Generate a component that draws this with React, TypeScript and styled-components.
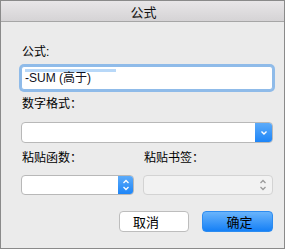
import React from "react";
import styled, { createGlobalStyle } from "styled-components";

const Global = createGlobalStyle`
  html, body { margin: 0; padding: 0; background: #ebebeb; }
  body { font-family: "Liberation Sans", "Noto Sans CJK SC", sans-serif; }
`;

const Window = styled.div`
  width: 285px;
  height: 249px;
  box-sizing: border-box;
  border: 1px solid #8a8a8a;
  background: #ebebeb;
  display: flex;
  flex-direction: column;
`;

const TitleBar = styled.div`
  height: 20px;
  border-bottom: 1px solid #a6a6a6;
  background: linear-gradient(#e8e6e8, #d5d3d5);
  display: flex;
  align-items: center;
  justify-content: center;
  font-family: "Noto Sans CJK SC", sans-serif;
  font-size: 13px;
  color: #111;
  padding-left: 2px;
`;

const Body = styled.div`
  padding: 0 11px 0 20px;
  display: flex;
  flex-direction: column;
`;

const Label = styled.div<{ $mt: number }>`
  margin-top: ${(p) => p.$mt}px;
  height: 16px;
  line-height: 16px;
  font-family: "Liberation Sans", "Noto Sans CJK SC", sans-serif;
  font-size: 12px;
  color: #000;
  padding-left: 1px;
`;

const Input = styled.div`
  margin-top: 6px;
  height: 24px;
  box-sizing: border-box;
  border: 1px solid #8fbbe9;
  box-shadow: 0 0 0 2px #8fbbe9;
  border-radius: 3px;
  background: #fff;
  display: flex;
  align-items: center;
  padding-left: 3px;
  font-size: 12px;
  color: #101020;
`;

const Selected = styled.span`
  display: inline-block;
  width: 91px;
  line-height: 18px;
  background: linear-gradient(#b8d8f8 0 3px, transparent 3px);
  white-space: pre;
`;

const Select = styled.div<{ $mt: number; $h: number; $disabled?: boolean }>`
  margin-top: ${(p) => p.$mt}px;
  height: ${(p) => p.$h}px;
  box-sizing: border-box;
  border: 1px solid ${(p) => (p.$disabled ? "#d3d3d3" : "#b8b8b8")};
  border-radius: 4px;
  background: ${(p) => (p.$disabled ? "#f2f2f2" : "#fff")};
  display: flex;
  justify-content: flex-end;
  overflow: hidden;
`;

const BlueCap = styled.div<{ $w: number }>`
  width: ${(p) => p.$w}px;
  margin: -1px -1px -1px 0;
  background: linear-gradient(#5fadfa, #1a83f7);
  border-radius: 0 4px 4px 0;
  display: flex;
  align-items: center;
  justify-content: center;
`;

const GrayCap = styled.div`
  width: 18px;
  display: flex;
  align-items: center;
  justify-content: center;
`;

const Row = styled.div`
  display: grid;
  grid-template-columns: 113px 1fr;
  column-gap: 9px;
`;

const Col = styled.div`
  display: flex;
  flex-direction: column;
`;

const Buttons = styled.div`
  margin-top: 16px;
  display: flex;
  justify-content: flex-end;
  gap: 13px;
`;

const Button = styled.button<{ $primary?: boolean }>`
  height: 21px;
  width: ${(p) => (p.$primary ? 71 : 70)}px;
  box-sizing: border-box;
  border-radius: 4px;
  border: 1px solid ${(p) => (p.$primary ? "#2d8cf0" : "#bdbdbd")};
  background: ${(p) => (p.$primary ? "linear-gradient(#6ab4fb, #1580f6)" : "#fff")};
  font-family: "Noto Sans CJK SC", sans-serif;
  font-size: 13px;
  color: #000;
  padding: ${(p) => (p.$primary ? "0 0 0 4px" : "0 16px 0 0")};
  line-height: 19px;
`;

const Down = () => (
  <svg width="8" height="6" viewBox="0 0 8 6">
    <path d="M1.5 1.5 L4 4 L6.5 1.5" stroke="#fff" strokeWidth="1.4" fill="none" />
  </svg>
);

const UpDown = ({ color }: { color: string }) => (
  <svg width="8" height="14" viewBox="0 0 8 14">
    <path d="M1.5 5 L4 2.5 L6.5 5" stroke={color} strokeWidth="1.3" fill="none" />
    <path d="M1.5 9 L4 11.5 L6.5 9" stroke={color} strokeWidth="1.3" fill="none" />
  </svg>
);

export default function App() {
  return (
    <>
      <Global />
      <Window>
        <TitleBar>公式</TitleBar>
        <Body>
          <Label $mt={22}>公式:</Label>
          <Input>
            <Selected>-SUM (高于)</Selected>
          </Input>
          <Label $mt={6}>数字格式：</Label>
          <Select $mt={10} $h={21}>
            <BlueCap $w={18}>
              <Down />
            </BlueCap>
          </Select>
          <Row>
            <Col>
              <Label $mt={7}>粘贴函数：</Label>
              <Select $mt={9} $h={20}>
                <BlueCap $w={16}>
                  <UpDown color="#fff" />
                </BlueCap>
              </Select>
            </Col>
            <Col>
              <Label $mt={7}>粘贴书签：</Label>
              <Select $mt={9} $h={20} $disabled>
                <GrayCap>
                  <UpDown color="#9a9a9a" />
                </GrayCap>
              </Select>
            </Col>
          </Row>
          <Buttons>
            <Button>取消</Button>
            <Button $primary>确定</Button>
          </Buttons>
        </Body>
      </Window>
    </>
  );
}
